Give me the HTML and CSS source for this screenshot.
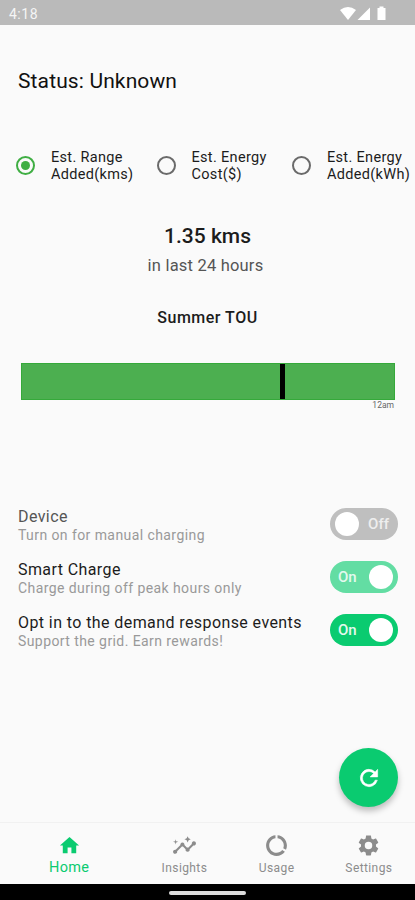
FILE: index.html
```html
<!DOCTYPE html>
<html lang="en">

<head>
    <meta charset="utf-8">
    <title>Smart Charge</title>
    <link rel="stylesheet" href="styles.css">
</head>

<body>
    <div class="statusbar">
        <span class="time">4:18</span>
        <svg class="signals" width="48" height="16" viewBox="0 0 48 16">
            <path d="M0 4Q8-2 16 4L8 14Z" />
            <path d="M17.500 14L30 1.500V14Z" />
            <path d="M37.500 3V2h2V.500h4V2h2v12h-8Z" />
        </svg>
    </div>

    <main>
        <h1>Status: Unknown</h1>

        <div class="options">
            <div class="option">
                <span class="radio checked"></span>
                <div class="name">Est. Range<br>Added(kms)</div>
            </div>
            <div class="option">
                <span class="radio"></span>
                <div class="name">Est. Energy<br>Cost($)</div>
            </div>
            <div class="option">
                <span class="radio"></span>
                <div class="name">Est. Energy<br>Added(kWh)</div>
            </div>
        </div>

        <div class="summary">
            <div class="amount">1.35 kms</div>
            <div class="period">in last 24 hours</div>
            <div class="plan">Summer TOU</div>
        </div>

        <div class="tou">
            <div class="bar"><div class="now"></div></div>
            <div class="hour">12am</div>
        </div>

        <div class="controls">
            <div class="row">
                <div class="label">
                    <div class="title device">Device</div>
                    <div class="hint">Turn on for manual charging</div>
                </div>
                <div class="toggle off"><i></i><span>Off</span></div>
            </div>
            <div class="row">
                <div class="label">
                    <div class="title">Smart Charge</div>
                    <div class="hint">Charge during off peak hours only</div>
                </div>
                <div class="toggle dim"><span>On</span><i></i></div>
            </div>
            <div class="row">
                <div class="label">
                    <div class="title">Opt in to the demand response events</div>
                    <div class="hint">Support the grid. Earn rewards!</div>
                </div>
                <div class="toggle"><span>On</span><i></i></div>
            </div>
        </div>
    </main>

    <button class="refresh" title="Refresh">
        <svg width="26" height="26" viewBox="0 0 24 24">
            <path d="M17.650 6.350A8 8 0 1 0 19.730 14h-2.080A6 6 0 1 1 12 6c1.660 0 3.140.690 4.220 1.780L13 11h7V4z" />
        </svg>
    </button>

    <nav>
        <div class="tab active">
            <svg viewBox="0 0 24 24"><path d="M10 20v-6h4v6h5v-8h3L12 3 2 12h3v8z" /></svg>
            <span>Home</span>
        </div>
        <div class="tab">
            <svg viewBox="0 0 24 24">
                <path d="M21 8c-1.450 0-2.260 1.440-1.930 2.510l-3.550 3.560c-.3-.09-.74-.09-1.040 0l-2.550-2.550C12.270 10.450 11.460 9 10 9c-1.450 0-2.270 1.440-1.930 2.520l-4.560 4.550C2.440 15.740 1 16.550 1 18c0 1.100.9 2 2 2 1.450 0 2.260-1.440 1.930-2.510l4.550-4.560c.3.09.74.09 1.040 0l2.550 2.550C12.730 16.550 13.540 18 15 18c1.450 0 2.270-1.440 1.930-2.520l3.560-3.550C21.560 12.260 23 11.450 23 10c0-1.100-.9-2-2-2z" />
                <path d="M15 9l.94-2.070L18 6l-2.060-.93L15 3l-.92 2.070L12 6l2.080.93zM3.500 11L4 9l2-.5L4 8l-.5-2L3 8l-2 .5L3 9z" />
            </svg>
            <span>Insights</span>
        </div>
        <div class="tab">
            <svg viewBox="0 0 24 24"><path d="M13 2.050v3.030c3.390.49 6 3.390 6 6.920 0 .9-.18 1.750-.48 2.540l2.600 1.530c.56-1.240.88-2.620.88-4.070 0-5.180-3.950-9.450-9-9.950zM12 19c-3.870 0-7-3.130-7-7 0-3.530 2.610-6.430 6-6.920V2.050c-5.060.5-9 4.760-9 9.950 0 5.520 4.470 10 9.990 10 3.310 0 6.240-1.610 8.060-4.090l-2.600-1.530C16.170 17.980 14.210 19 12 19z" /></svg>
            <span>Usage</span>
        </div>
        <div class="tab">
            <svg viewBox="0 0 24 24"><path d="M19.140 12.940c.04-.3.06-.61.06-.94s-.02-.64-.07-.94l2.030-1.580c.18-.14.23-.41.12-.61l-1.920-3.320c-.12-.22-.37-.29-.59-.22l-2.390.96c-.5-.38-1.030-.7-1.620-.94l-.36-2.540c-.04-.24-.24-.41-.48-.41h-3.840c-.24 0-.43.17-.47.41l-.36 2.540c-.59.24-1.130.57-1.620.94l-2.390-.96c-.22-.08-.47 0-.59.22L2.740 8.870c-.12.21-.08.47.12.61l2.030 1.580c-.05.3-.09.63-.09.94s.02.64.07.94l-2.030 1.580c-.18.14-.23.41-.12.61l1.920 3.320c.12.22.37.29.59.22l2.390-.96c.5.38 1.030.7 1.620.94l.36 2.540c.05.24.24.41.48.41h3.840c.24 0 .44-.17.47-.41l.36-2.540c.59-.24 1.130-.56 1.620-.94l2.390.96c.22.08.47 0 .59-.22l1.920-3.320c.12-.22.07-.47-.12-.61zM12 15.600A3.600 3.600 0 1 1 12 8.400a3.600 3.600 0 0 1 0 7.200z" /></svg>
            <span>Settings</span>
        </div>
    </nav>
    <div class="homebar"><div></div></div>
</body>

</html>
```
FILE: styles.css
```css
* {
    box-sizing: border-box;
}

body {
    margin: 0;
    height: 900px;
    display: flex;
    flex-direction: column;
    overflow: hidden;
    background: #fafafa;
    color: #1c1c1c;
    font-family: Roboto, sans-serif;
    white-space: nowrap;
}

.statusbar {
    display: flex;
    justify-content: space-between;
    height: 25px;
    padding: 6px 27px 0 9px;
    background: #bababa;
    color: #f5f5f5;
}

.time {
    font-size: 14px;
    line-height: 16px;
    letter-spacing: 0.5px;
}

.signals {
    fill: white;
}

main {
    flex: 1;
}

h1 {
    margin: 43px 18px 0;
    font-size: 21px;
    font-weight: 400;
    line-height: 26px;
    letter-spacing: 0.13px;
    color: #111;
}

.options {
    display: grid;
    grid-template-columns: 140.5px 135.5px auto;
    height: 34px;
    margin: 54px 0 0 16px;
}

.option {
    display: flex;
    align-items: center;
    gap: 16px;
    font-size: 14.5px;
    line-height: 16.5px;
    letter-spacing: 0.32px;
}

.name {
    padding-top: 2px;
}

.radio {
    width: 19px;
    height: 19px;
    border: 2px solid #6a6a6a;
    border-radius: 50%;
}

.checked {
    padding: 3px;
    border-color: #3fae43;
    background: #3fae43 content-box;
}

.summary {
    text-align: center;
}

.amount {
    margin-top: 41px;
    font-size: 21px;
    font-weight: 500;
    line-height: 26px;
}

.period {
    margin-top: 7px;
    padding-right: 4px;
    font-size: 16.5px;
    line-height: 20px;
    letter-spacing: 0.2px;
    color: #555;
}

.plan {
    margin-top: 32px;
    font-size: 16px;
    font-weight: 500;
    line-height: 20px;
    letter-spacing: 0.5px;
}

.tou {
    margin: 35px 20px 0 21px;
}

.bar {
    height: 37px;
    padding-left: 258px;
    border: 1px solid #35a93a;
    background: #4caf50;
}

.now {
    width: 5px;
    height: 35px;
    background: black;
}

.hour {
    padding-right: 1px;
    font-size: 8.5px;
    line-height: 10px;
    text-align: right;
    color: #666;
}

.controls {
    margin: 88px 17px 0 18px;
}

.row {
    display: flex;
    justify-content: space-between;
    align-items: center;
    height: 52.7px;
}

.label {
    padding-top: 2.6px;
}

.title {
    font-size: 16px;
    line-height: 19px;
    letter-spacing: 0.41px;
}

.device {
    color: #555;
}

.hint {
    font-size: 14px;
    line-height: 18px;
    letter-spacing: 0.42px;
    color: #999;
}

.toggle {
    display: flex;
    justify-content: space-between;
    align-items: center;
    width: 68px;
    height: 32px;
    padding: 0 5px 0 8px;
    border-radius: 16px;
    background: #0acb70;
    color: #e4f9ee;
    font-size: 15px;
    font-weight: 500;
}

.toggle i {
    width: 24px;
    height: 24px;
    border-radius: 50%;
    background: white;
}

.off {
    padding: 0 9px 0 5px;
    background: #bfbfbf;
    color: #eee;
}

.dim {
    background: #63dda3;
}

/* floats over the page, just above the tabs */
.refresh {
    position: absolute;
    right: 17px;
    bottom: 93px;
    display: flex;
    justify-content: center;
    align-items: center;
    width: 59px;
    height: 59px;
    padding: 0;
    border: none;
    border-radius: 50%;
    background: #0acb70;
    box-shadow: 0 4px 6px rgba(0, 0, 0, 0.25);
}

.refresh svg {
    fill: white;
    stroke: white;
    stroke-width: 0.5;
}

nav {
    display: grid;
    grid-template-columns: 3fr 2fr 2fr 2fr;
    height: 62px;
    border-top: 1px solid #f1f1f1;
}

.tab {
    display: flex;
    flex-direction: column;
    align-items: center;
    padding-top: 10px;
    font-size: 12px;
    line-height: 16px;
    letter-spacing: 0.4px;
    color: #8c8c8c;
}

.tab svg {
    width: 25px;
    height: 25px;
    margin-bottom: 2px;
    fill: currentColor;
}

.active {
    padding-top: 11px;
    font-size: 14.5px;
    letter-spacing: 0.3px;
    color: #0acb70;
}

.active svg {
    width: 23px;
    height: 23px;
    margin-bottom: 3px;
}

.homebar {
    display: flex;
    justify-content: center;
    height: 16px;
    padding-top: 7px;
    background: black;
}

.homebar div {
    width: 77px;
    height: 4px;
    border-radius: 2px;
    background: #ddd;
}
```
